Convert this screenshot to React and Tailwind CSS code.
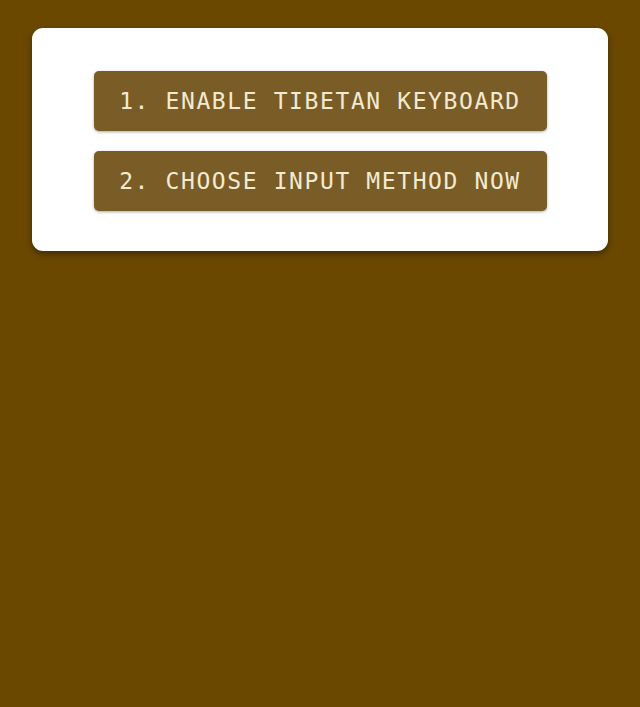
export default function App() {
  const btnCls = 'w-[453px] h-[60px] rounded-[5px] bg-[#7a5c26] text-[#f3ead2] text-[23px] tracking-[1.6px] flex items-center justify-center shadow-[0_1px_3px_rgba(0,0,0,0.35)]';

  return (
    <div className="min-h-[707px] w-full bg-[#6a4800] pt-[28px] px-[32px]" style={{ fontFamily: '"DejaVu Sans Mono", monospace' }}>
      <div className="w-[576px] h-[223px] bg-white rounded-[11px] shadow-[0_3px_6px_rgba(0,0,0,0.4)] pt-[43px] flex flex-col items-center gap-[20px]">
        <button className={btnCls}>1. ENABLE TIBETAN KEYBOARD</button>
        <button className={btnCls}>2. CHOOSE INPUT METHOD NOW</button>
      </div>
    </div>
  );
}
